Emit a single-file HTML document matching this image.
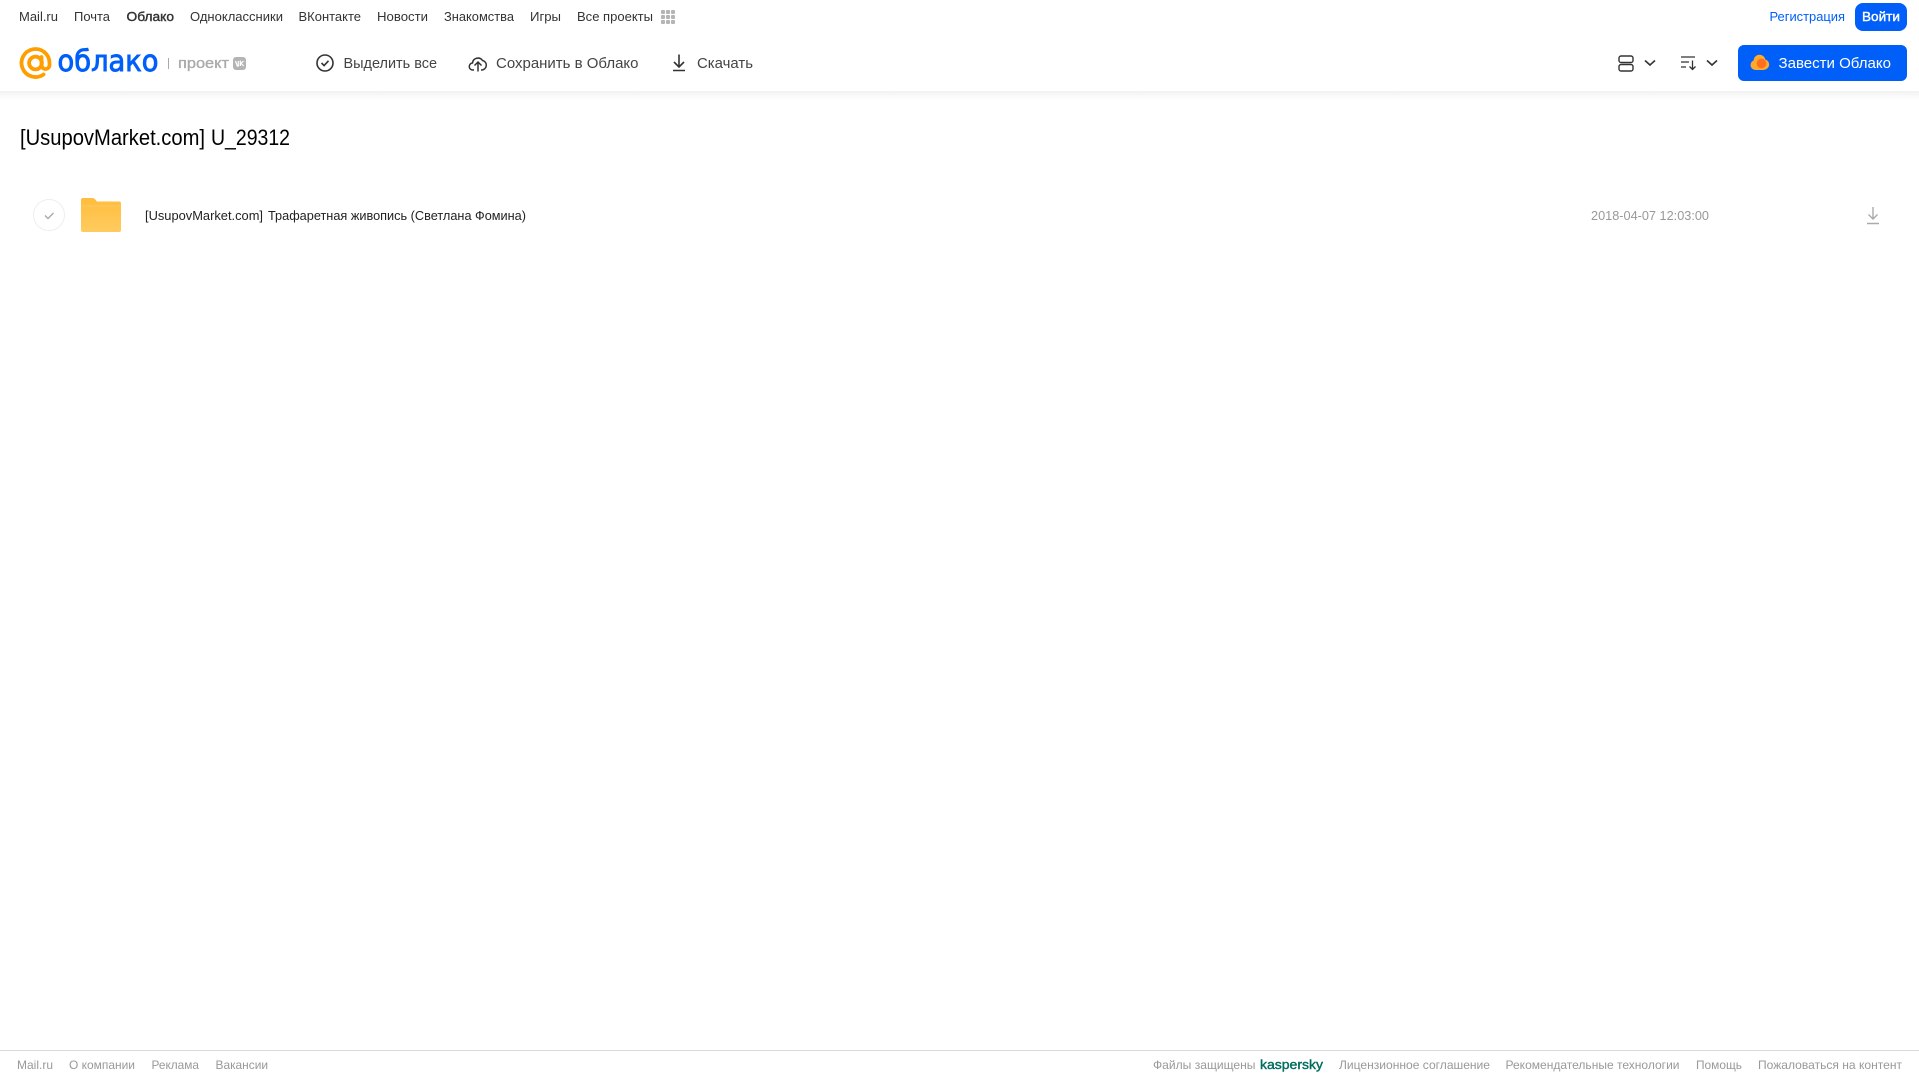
<!DOCTYPE html>
<html lang="ru">
<head>
<meta charset="utf-8">
<title>[UsupovMarket.com] U_29312</title>
<style>
html,body{margin:0;padding:0;width:1919px;height:1079px;overflow:hidden;background:#fff}
svg{display:block;position:absolute;left:0;top:0}
text{font-family:"Liberation Sans",sans-serif}
.n{font-size:13px;fill:#333}
.t{font-size:15px;fill:#444}
.f{font-size:12px;fill:#999}
</style>
</head>
<body>
<svg width="1919" height="1079" viewBox="0 0 1919 1079" xmlns="http://www.w3.org/2000/svg">
<defs>
<linearGradient id="sh" x1="0" y1="0" x2="0" y2="1"><stop offset="0" stop-color="#f2f2f2"/><stop offset="1" stop-color="#fff"/></linearGradient>
<linearGradient id="fo" x1="0" y1="0" x2="0" y2="1"><stop offset="0" stop-color="#ffbd3c"/><stop offset="1" stop-color="#ffcb60"/></linearGradient>
</defs>
<rect x="0" y="91" width="1919" height="9" fill="url(#sh)"/>

<!-- top nav -->
<g>
<text class="n" x="19" y="21" textLength="39" lengthAdjust="spacingAndGlyphs">Mail.ru</text>
<text class="n" x="74" y="21" textLength="36" lengthAdjust="spacingAndGlyphs">Почта</text>
<text class="n" x="126.500" y="21" textLength="47.500" lengthAdjust="spacingAndGlyphs" stroke="#333" stroke-width=".4">Облако</text>
<text class="n" x="190" y="21" textLength="93" lengthAdjust="spacingAndGlyphs">Одноклассники</text>
<text class="n" x="298.500" y="21" textLength="62.500" lengthAdjust="spacingAndGlyphs">ВКонтакте</text>
<text class="n" x="377" y="21" textLength="51" lengthAdjust="spacingAndGlyphs">Новости</text>
<text class="n" x="444" y="21" textLength="70" lengthAdjust="spacingAndGlyphs">Знакомства</text>
<text class="n" x="530" y="21" textLength="31" lengthAdjust="spacingAndGlyphs">Игры</text>
<text class="n" x="577" y="21" textLength="76" lengthAdjust="spacingAndGlyphs">Все проекты</text>
</g>
<g fill="#b5b5b5">
<rect x="661" y="10" width="4" height="4" rx="1"/><rect x="666" y="10" width="4" height="4" rx="1"/><rect x="671" y="10" width="4" height="4" rx="1"/>
<rect x="661" y="15" width="4" height="4" rx="1"/><rect x="666" y="15" width="4" height="4" rx="1"/><rect x="671" y="15" width="4" height="4" rx="1"/>
<rect x="661" y="20" width="4" height="4" rx="1"/><rect x="666" y="20" width="4" height="4" rx="1"/><rect x="671" y="20" width="4" height="4" rx="1"/>
</g>
<text x="1769.500" y="21" font-size="13" fill="#005ff9" textLength="75.500" lengthAdjust="spacingAndGlyphs">Регистрация</text>
<rect x="1855" y="3" width="52" height="28" rx="8" fill="#005ff9"/>
<text x="1862" y="21" font-size="13" fill="#fff" stroke="#fff" stroke-width=".4" textLength="38" lengthAdjust="spacingAndGlyphs">Войти</text>

<!-- logo -->
<path d="M41.500 57v8a4 4 0 0 0 8 0v-2a14 14 0 1 0-6 11.500" fill="none" stroke="#ff9e00" stroke-width="3.800" stroke-linecap="round"/>
<circle cx="35.500" cy="63" r="6.400" fill="none" stroke="#ff9e00" stroke-width="3.800"/>
<text x="57.500" y="71" font-size="29" style="font-family:'DejaVu Sans',sans-serif" fill="#005ff9" stroke="#005ff9" stroke-width=".9" textLength="101" lengthAdjust="spacingAndGlyphs">облако</text>
<rect x="168" y="58" width="1" height="11" fill="#aaa"/>
<text x="178" y="68" font-size="15" fill="#aaa" stroke="#aaa" stroke-width=".35" textLength="51" lengthAdjust="spacingAndGlyphs">проект</text>
<rect x="233" y="57" width="13" height="13" rx="3" fill="#b4b4b4"/>
<path d="M235.500 61l1.800 5h1V61M243.500 61l-2.500 2.400 2.700 2.600M240.300 60.500v5.500" fill="none" stroke="#fff" stroke-width="1.200"/>

<!-- actions -->
<circle cx="325" cy="63" r="8" fill="none" stroke="#333" stroke-width="1.600"/>
<path d="M321.500 63l2.600 2.600 4.400-4.800" fill="none" stroke="#333" stroke-width="1.600"/>
<text class="t" x="343.500" y="68" textLength="93.500" lengthAdjust="spacingAndGlyphs">Выделить все</text>

<path d="M474 70h-1a3.500 3.500 0 0 1-.5-7a5.500 5.500 0 0 1 10-2.500a4.800 4.800 0 0 1-1 9.500h-.5" fill="none" stroke="#333" stroke-width="1.500" stroke-linejoin="round"/>
<path d="M478 71.500v-9M474.500 65.500l3.500-3.500 3.500 3.500" fill="none" stroke="#333" stroke-width="1.500"/>
<text class="t" x="496" y="68" textLength="142.500" lengthAdjust="spacingAndGlyphs">Сохранить в Облако</text>

<path d="M679 54.500v12M674 62l5 5 5-5M673 70.500h12" fill="none" stroke="#333" stroke-width="1.600"/>
<text class="t" x="697" y="68" textLength="56" lengthAdjust="spacingAndGlyphs">Скачать</text>

<!-- view / sort -->
<rect x="1619" y="56" width="14" height="6.500" rx="2" fill="none" stroke="#333" stroke-width="1.400"/>
<rect x="1619" y="64.500" width="14" height="6.500" rx="2" fill="none" stroke="#333" stroke-width="1.400"/>
<path d="M1645 60.500l5 4.500 5-4.500" fill="none" stroke="#333" stroke-width="1.600"/>
<path d="M1681 57h14M1681 62h8M1681 67h5" fill="none" stroke="#333" stroke-width="1.300"/>
<path d="M1692.500 60.500v9M1689.500 66.500l3 3 3-3" fill="none" stroke="#333" stroke-width="1.300"/>
<path d="M1707 60.500l5 4.500 5-4.500" fill="none" stroke="#333" stroke-width="1.600"/>

<!-- CTA -->
<rect x="1738" y="45" width="169" height="36" rx="6" fill="#005ff9"/>
<circle cx="1755.500" cy="65" r="5" fill="#ffa92e"/>
<circle cx="1759.500" cy="60.500" r="5.800" fill="#ffa92e"/>
<circle cx="1764" cy="64.500" r="5.200" fill="#ffa92e"/>
<rect x="1755" y="62" width="9" height="8" fill="#ffa92e"/>
<circle cx="1761.500" cy="63.500" r="4.800" fill="#ff6f1f"/>
<text x="1778.500" y="68" font-size="15" fill="#fff" textLength="112.500" lengthAdjust="spacingAndGlyphs">Завести Облако</text>

<!-- title -->
<text x="20" y="145" font-size="22" fill="#000" textLength="185" lengthAdjust="spacingAndGlyphs">[UsupovMarket.com]</text>
<text x="211" y="145" font-size="22" fill="#000" textLength="79" lengthAdjust="spacingAndGlyphs">U_29312</text>

<!-- row -->
<circle cx="49" cy="215" r="15.500" fill="#fff" stroke="#eeeeee"/>
<path d="M45 215.500l3 3 5.500-5.500" fill="none" stroke="#a5a5a5" stroke-width="1.300"/>
<path d="M81 200a2 2 0 0 1 2-2h9c2 0 3 1 4.500 3l.5.500h22a2 2 0 0 1 2 2v26.500a2 2 0 0 1-2 2H83a2 2 0 0 1-2-2z" fill="url(#fo)"/>
<path d="M81 206h40" stroke="#ffd27a" stroke-width=".6"/>
<text x="145" y="220" font-size="13" fill="#222" textLength="118" lengthAdjust="spacingAndGlyphs">[UsupovMarket.com]</text>
<text x="268" y="220" font-size="13" fill="#222" textLength="258" lengthAdjust="spacingAndGlyphs">Трафаретная живопись (Светлана Фомина)</text>
<text x="1591" y="220" font-size="13" fill="#999" textLength="118" lengthAdjust="spacingAndGlyphs">2018-04-07 12:03:00</text>
<path d="M1873 207v12M1868.500 214.500l4.500 4.500 4.500-4.500M1867 223.500h12" fill="none" stroke="#aaa" stroke-width="1.400"/>

<!-- footer -->
<rect x="0" y="1050" width="1919" height="1" fill="#d9d9d9"/>
<text class="f" x="17" y="1069" textLength="36" lengthAdjust="spacingAndGlyphs">Mail.ru</text>
<text class="f" x="69" y="1069" textLength="66" lengthAdjust="spacingAndGlyphs">О компании</text>
<text class="f" x="151.500" y="1069" textLength="47.500" lengthAdjust="spacingAndGlyphs">Реклама</text>
<text class="f" x="215.500" y="1069" textLength="52.500" lengthAdjust="spacingAndGlyphs">Вакансии</text>
<text class="f" x="1153" y="1069" textLength="102.500" lengthAdjust="spacingAndGlyphs">Файлы защищены</text>
<text x="1260" y="1069" font-size="13" fill="#006d5c" stroke="#006d5c" stroke-width=".4" textLength="63" lengthAdjust="spacingAndGlyphs">kaspersky</text>
<text class="f" x="1339" y="1069" textLength="151" lengthAdjust="spacingAndGlyphs">Лицензионное соглашение</text>
<text class="f" x="1505.500" y="1069" textLength="174" lengthAdjust="spacingAndGlyphs">Рекомендательные технологии</text>
<text class="f" x="1696" y="1069" textLength="46" lengthAdjust="spacingAndGlyphs">Помощь</text>
<text class="f" x="1758" y="1069" textLength="144" lengthAdjust="spacingAndGlyphs">Пожаловаться на контент</text>
</svg>
</body>
</html>
